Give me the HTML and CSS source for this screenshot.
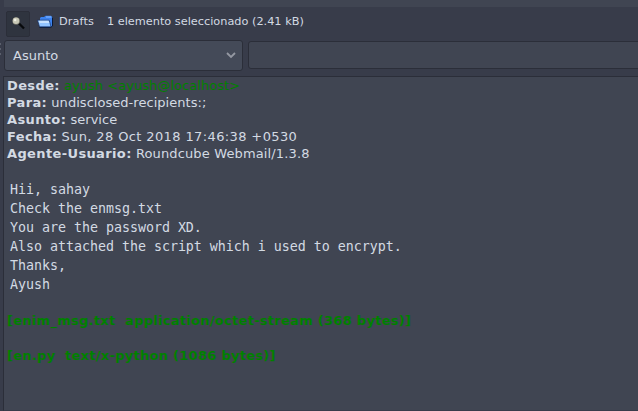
FILE: index.html
```html
<!DOCTYPE html>
<html lang="es">
<head>
<meta charset="utf-8">
<title>Drafts</title>
<link rel="stylesheet" href="styles.css">
</head>
<body>
<div class="app">
  <div class="pane-end"></div>
  <div class="status">
    <button class="toggle" aria-label="Buscar">
      <svg width="14" height="14" viewBox="0 0 14 14"><path d="M6.5 6 12 11.5" stroke="#07090c" stroke-width="2.3"/><circle cx="4.2" cy="4" r="3.8" fill="#747469"/><circle cx="4" cy="3.8" r="3.2" fill="#c8c8b7"/><circle cx="3.2" cy="3" r="1.2" fill="#f1f1e5"/></svg>
    </button>
    <svg class="folder" width="17" height="14" viewBox="0 0 17 14"><path d="M3 5V3L4 2H7L8.5.8H14L15.6 2.4V11L13.5 12.3H3Z" fill="#3c82ee"/><path d="M9 2H14.3" stroke="#8abaff"/><path d="M15.5 2.5V11L13.8 12.4H2.5" fill="none" stroke="#0b1935"/><path d="M.5 5.2H12.2L14 11.8H2.5Z" fill="#92c4ff" stroke="#142c60" stroke-width=".7"/><path d="M1.5 5.8H11.6L12.3 8H2.5Z" fill="#c8e2ff"/></svg>
    <span class="name">Drafts</span>
    <span class="count">1 elemento seleccionado (2.41 kB)</span>
  </div>
  <div class="search">
    <div class="grip"><i></i><i></i><i></i></div>
    <div class="select"><span>Asunto</span><svg width="10" height="7" viewBox="0 0 10 7"><path d="M1 1 5 5 9 1" fill="none" stroke="#9498a2" stroke-width="1.8"/></svg></div>
    <div class="field"></div>
  </div>
  <main class="message">
    <div class="headers">
      <p><b>Desde:</b> <span class="from">ayush &lt;ayush@localhost&gt;</span></p>
      <p><b>Para:</b> <span>undisclosed-recipients:;</span></p>
      <p><b>Asunto:</b> <span>service</span></p>
      <p><b>Fecha:</b> <span class="date">Sun, 28 Oct 2018 17:46:38 +0530</span></p>
      <p><b>Agente-Usuario:</b> <span class="agent">Roundcube Webmail/1.3.8</span></p>
    </div>
    <pre class="text">Hii, sahay
Check the enmsg.txt
You are the password XD.
Also attached the script which i used to encrypt.
Thanks,
Ayush</pre>
    <p class="attachment first">[enim_msg.txt  application/octet-stream (368 bytes)]</p>
    <p class="attachment">[en.py  text/x-python (1086 bytes)]</p>
  </main>
</div>
</body>
</html>
```
FILE: styles.css
```css
* { box-sizing: border-box; }
body { margin: 0; background: #383c4a; color: #d3dae3; font: 13px/17px "DejaVu Sans", sans-serif; }
p, pre { margin: 0; }
.app { height: 411px; display: flex; flex-direction: column; overflow: hidden; }
.pane-end { height: 7px; margin-left: 4px; background: #404552; flex: none; }
.status { height: 33px; padding: 4px 0 3px 6px; display: flex; align-items: flex-start; flex: none; font-size: 11.3px; line-height: 21px; white-space: nowrap; }
.toggle { width: 24px; height: 26px; padding: 0 0 0 5px; border: 1px solid #2b2e39; border-radius: 2px; background: #2f343f; text-align: left; }
.toggle svg { display: block; }
.folder { margin: 4px 0 0 7px; }
.name { margin-left: 5px; letter-spacing: .1px; }
.count { margin-left: 13px; }
.search { height: 36px; display: flex; flex: none; }
.grip { width: 4px; padding-top: 3px; display: flex; flex-direction: column; gap: 3px; }
.grip i { width: 1px; height: 2px; background: #5b606d; }
.select { width: 239px; height: 31px; padding: 0 6px 0 8px; border: 1px solid #2b2e39; border-radius: 3px; background: #444a58; display: flex; align-items: center; justify-content: space-between; }
.field { flex: 1; height: 28px; margin: 1px -4px 0 5px; border: 1px solid #2b2e39; border-radius: 3px; background: #404552; }
.message { flex: 1; margin-left: 3px; padding: 0 0 0 3px; border: 1px solid #2b2e39; border-right: 0; border-bottom-color: #383c4a; background: #404552; }
.headers p { white-space: nowrap; }
.headers b { letter-spacing: .37px; }
.headers span { letter-spacing: .04px; }
.headers .date { letter-spacing: .38px; }
.headers .agent { letter-spacing: .14px; }
.headers .from { color: #008000; }
.text { margin: 18px 0 0 3px; font: 13.33px/19px "DejaVu Sans Mono", monospace; letter-spacing: -.03px; }
.attachment { color: #008000; font-weight: bold; white-space: pre; letter-spacing: .28px; }
.first { margin: 18px 0; }
```
